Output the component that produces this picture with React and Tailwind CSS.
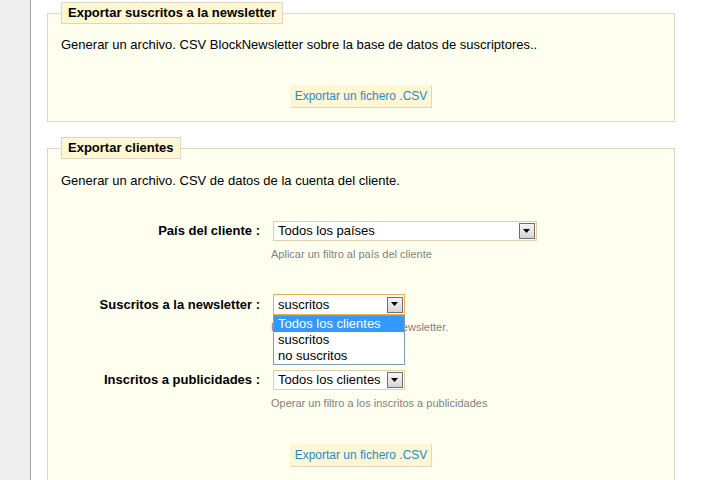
import React from "react";

function Arrow() {
  return (
    <div className="m-[1px] flex h-[16px] w-[16px] shrink-0 items-center justify-center border border-[#6f6f6f] bg-gradient-to-b from-[#f6f6f6] to-[#d6d6d6]">
      <svg width="8" height="5" viewBox="0 0 8 5">
        <path d="M0 0 H7 L3.5 4 Z" fill="#000" />
      </svg>
    </div>
  );
}

function Row({ label, children }) {
  return (
    <div className="flex items-center">
      <div className="w-[199px] shrink-0 text-right text-[13px] font-bold leading-[16px] text-black">{label}</div>
      <div className="ml-[13px]">{children}</div>
    </div>
  );
}

function Button() {
  return (
    <div className="flex justify-center">
      <div className="h-[23px] border border-[#fff6d3] border-b-[#dfd5c3] border-r-[#dfd5c3] bg-[#fff6d3] px-[4px] text-[12px] leading-[21px] text-[#268ccd]">
        Exportar un fichero .CSV
      </div>
    </div>
  );
}

export default function App() {
  return (
    <div className="flex h-[480px] w-[722px] overflow-hidden bg-white font-['Liberation_Sans',Arial,sans-serif] text-black">
      <div className="w-[31px] shrink-0 border-r border-[#a0a0a0] bg-[#efefef]" />
      <div className="pl-[16px]">
        <fieldset className="mt-[2px] w-[628px] border border-[#dfd5c3] bg-[#fffff0] px-[13px] pb-[13px]">
          <legend className="h-[22px] border border-[#dfd5c3] bg-[#fff6d3] px-[6px] text-[13px] font-bold leading-[20px]">
            Exportar suscritos a la newsletter
          </legend>
          <p className="mt-[13px] text-[13px] leading-[16px]">
            Generar un archivo. CSV BlockNewsletter sobre la base de datos de suscriptores..
          </p>
          <div className="mt-[32px]">
            <Button />
          </div>
        </fieldset>

        <fieldset className="mt-[15px] w-[628px] border border-[#dfd5c3] bg-[#fffff0] px-[13px] pb-[13px]">
          <legend className="h-[22px] border border-[#dfd5c3] bg-[#fff6d3] px-[6px] text-[13px] font-bold leading-[20px]">
            Exportar clientes
          </legend>
          <p className="mt-[14px] text-[13px] leading-[16px]">
            Generar un archivo. CSV de datos de la cuenta del cliente.
          </p>

          <div className="mt-[32px]">
            <Row label="País del cliente :">
              <div className="flex h-[20px] w-[264px] items-center border border-[#e0d0b1] bg-white">
                <span className="flex-1 pl-[4px] text-[13px] leading-[16px]">Todos los países</span>
                <Arrow />
              </div>
            </Row>
          </div>
          <p className="ml-[210px] mt-[7px] text-[11px] leading-[13px] text-[#808080]">
            Aplicar un filtro al país del cliente
          </p>

          <div className="mt-[33px]">
            <Row label="Suscritos a la newsletter :">
              <div className="relative">
                <div className="flex h-[21px] w-[132px] items-center border border-[#e6b04a] bg-white">
                  <span className="flex-1 pl-[4px] text-[13px] leading-[16px]">suscritos</span>
                  <Arrow />
                </div>
                <div className="absolute left-0 top-full z-10 w-[132px] border border-[#7f9db9] bg-white text-[13px] leading-[16px]">
                  <div className="h-[16px] bg-[#3399ff] px-[4px] text-white">Todos los clientes</div>
                  <div className="h-[16px] px-[4px]">suscritos</div>
                  <div className="h-[16px] px-[4px]">no suscritos</div>
                </div>
              </div>
            </Row>
          </div>
          <p className="ml-[210px] mt-[6px] text-[11px] leading-[13px] text-[#808080]">
            Filtrar a los suscritos a la newsletter.
          </p>

          <div className="mt-[36px]">
            <Row label="Inscritos a publicidades :">
              <div className="flex h-[20px] w-[132px] items-center border border-[#e0d0b1] bg-white">
                <span className="flex-1 pl-[4px] text-[13px] leading-[16px]">Todos los clientes</span>
                <Arrow />
              </div>
            </Row>
          </div>
          <p className="ml-[210px] mt-[7px] text-[11px] leading-[13px] text-[#808080]">
            Operar un filtro a los inscritos a publicidades
          </p>

          <div className="mt-[34px]">
            <Button />
          </div>
        </fieldset>
      </div>
    </div>
  );
}
